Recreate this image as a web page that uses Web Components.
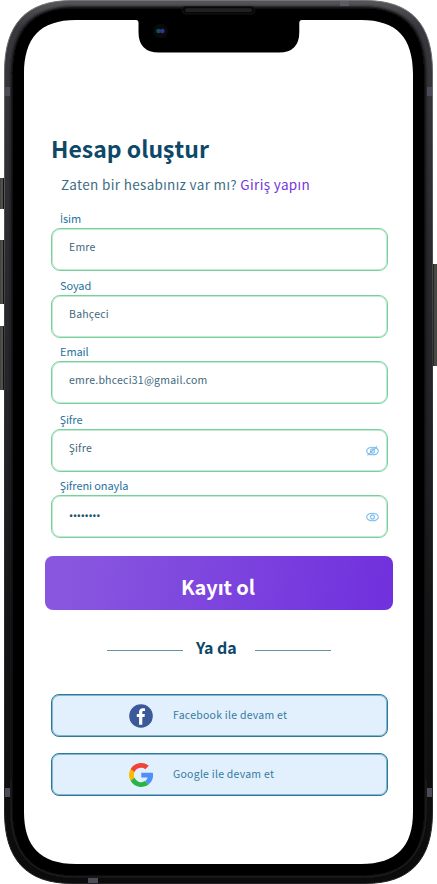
<!DOCTYPE html>
<html lang="tr">
<head>
<meta charset="utf-8">
<title>Hesap oluştur</title>
<style>
body{margin:0;background:#fff;font-family:"Noto Sans CJK SC","Noto Sans",sans-serif;color:#0d4868}
</style>
</head>
<body>
<phone-frame>
  <page-heading>
    <span slot="title">Hesap oluştur</span>
    <span slot="hint">Zaten bir hesabınız var mı?</span>
    <span slot="link">Giriş yapın</span>
  </page-heading>
  <form-stack>
    <text-field label="İsim">Emre</text-field>
    <text-field label="Soyad" style="--gap:6px">Bahçeci</text-field>
    <text-field label="Email" style="--gap:5px">emre.bhceci31@gmail.com</text-field>
    <text-field label="Şifre" icon="off" style="--gap:7px">Şifre</text-field>
    <text-field label="Şifreni onayla" icon="on" style="--gap:5px;--value:#1c536f;--ls:-.25px;--size:11px;--drop:3px;--family:'Noto Sans',sans-serif">••••••••</text-field>
  </form-stack>
  <primary-button>Kayıt ol</primary-button>
  <or-divider>Ya da</or-divider>
  <social-button brand="facebook">Facebook ile devam et</social-button>
  <social-button brand="google">Google ile devam et</social-button>
</phone-frame>
<script>
const define=(name,render)=>customElements.define(name,class extends HTMLElement{
  constructor(){super();this.attachShadow({mode:'open'});}
  connectedCallback(){this.shadowRoot.innerHTML=render(this);}
});

define('phone-frame',()=>`<style>
:host{display:block;position:relative;width:437px;height:884px;overflow:hidden}
svg{position:absolute;inset:0;display:block}
main{position:relative;box-sizing:border-box;padding:131px 49px 0 51px;display:flex;flex-direction:column}
</style>
<svg width="437" height="884" viewBox="0 0 437 884" aria-hidden="true">
<defs>
<linearGradient id="rim" x1="0" y1="0" x2="0" y2="1"><stop offset="0" stop-color="#55555a"/><stop offset=".03" stop-color="#38383e"/><stop offset=".3" stop-color="#29292e"/><stop offset=".5" stop-color="#232327"/><stop offset=".7" stop-color="#141416"/><stop offset="1" stop-color="#0b0b0c"/></linearGradient>
<linearGradient id="edge" x1="0" y1="0" x2="0" y2="1"><stop offset="0" stop-color="#73736f"/><stop offset=".5" stop-color="#2e2e32"/><stop offset="1" stop-color="#242224"/></linearGradient>
<linearGradient id="key" gradientUnits="userSpaceOnUse" x1="0" x2="4" y1="0" y2="0"><stop offset="0" stop-color="#3f3f3c"/><stop offset=".6" stop-color="#5b5b56"/><stop offset=".8" stop-color="#111"/></linearGradient>
<linearGradient id="keyR" gradientUnits="userSpaceOnUse" x1="433" x2="437" y1="0" y2="0"><stop offset="0" stop-color="#111"/><stop offset=".4" stop-color="#4d4d49"/><stop offset="1" stop-color="#44443f"/></linearGradient>
<filter id="soft" x="-5%" y="-5%" width="110%" height="110%"><feGaussianBlur stdDeviation="1.2"/></filter>
</defs>
<g fill="url(#key)"><rect x="-2" y="178" width="6.5" height="31" rx="1"/><rect x="-2" y="240" width="6.5" height="64" rx="1"/><rect x="-2" y="326" width="6.5" height="64" rx="1"/></g><rect x="432.500" y="264" width="6" height="102" rx="1" fill="url(#keyR)"/>
<path d="M72 .5H365C411 .5 432.500 24 432.500 72V812C432.500 859 411 883.500 365 883.500H72C26 883.500 4.500 859 4.500 812V72C4.500 24 26 .5 72 .5Z" fill="url(#rim)" stroke="url(#edge)"/>
<path d="M74 7H363C405 7 425.500 30 425.500 74V810C425.500 853 405 876.500 363 876.500H74C32 876.500 11.500 853 11.500 810V74C11.500 30 32 7 74 7Z" fill="#000" stroke="#18181a" stroke-width="1.500" filter="url(#soft)"/>
<path d="M11 780V810C11 853 32 877 74 877H363C405 877 426 853 426 810V780" fill="none" stroke="#202022"/>
<g fill="#4b4c57"><rect x="5" y="87" width="5" height="9"/><rect x="427" y="87" width="5" height="9"/><rect x="5" y="788" width="5" height="9"/><rect x="427" y="788" width="5" height="9"/><rect x="340" y="1" width="9" height="5" fill="#5c5d68"/><rect x="88" y="878" width="10" height="5"/></g>
<path d="M76 20H136Q138.500 20 138.500 23V32Q138.500 52.500 159 52.500H279Q299.300 52.500 299.300 32V23Q299.300 20 302 20H361C397 20 413 38 413 74V812C413 846 397 864 361 864H76C40 864 24 846 24 812V74C24 38 40 20 76 20Z" fill="#fff"/>
<rect x="182" y="6.500" width="73" height="7.500" rx="3.700" fill="#080808" stroke="#141414"/><rect x="185" y="8.300" width="67" height="3.600" rx="1.800" fill="#202020"/>
<circle cx="160.500" cy="31" r="7.300" fill="#0a0a0c"/><circle cx="158.500" cy="31" r="2.300" fill="#174b5c"/><circle cx="162.300" cy="31" r="2.300" fill="#253b8c"/>
</svg>
<main><slot></slot></main>`);

define('page-heading',()=>`<style>
:host{display:block;white-space:nowrap}
h1{margin:0;font-size:23px;line-height:34px;font-weight:700;letter-spacing:0}
p{margin:9px 0 0 10px;font-size:13.500px;line-height:20px;letter-spacing:.34px;color:#3d6d86}
.link{color:#7435de}
</style><h1><slot name="title"></slot></h1><p><slot name="hint"></slot> <span class="link"><slot name="link"></slot></span></p>`);

define('form-stack',()=>`<style>:host{display:flex;flex-direction:column;margin-top:16px}</style><slot></slot>`);

const eye='<ellipse cx="6.500" cy="5" rx="5.800" ry="3.800"/><ellipse cx="6.500" cy="5" rx="1.900" ry="2.100"/>';
define('text-field',el=>`<style>
:host{display:block;margin-top:var(--gap,0px);white-space:nowrap}
label{display:block;height:19px;padding-left:9px;font-size:11px;line-height:17px;letter-spacing:-.1px;color:#26739a}
.dotted{font-family:"Open Sans",sans-serif}
.box{box-sizing:border-box;width:337px;height:43px;margin-top:-1px;border:1px solid #78d09b;box-shadow:inset 0 0 0 1px #78d09b70;border-radius:9px;display:flex;align-items:center;justify-content:space-between;padding:0 8px 5px 17px;font-family:var(--family,inherit);font-size:var(--size,10.500px);line-height:18px;letter-spacing:var(--ls,.23px);color:var(--value,#41687d)}
.box span{padding-top:var(--drop,0)}
svg{margin-top:5px;fill:none;stroke:#7abdee;stroke-width:1.1}
</style><label>${el.getAttribute('label').replace('İ','<span class="dotted">İ</span>')}</label><div class="box"><span><slot></slot></span>${el.hasAttribute('icon')?`<svg width="13" height="10" viewBox="0 0 13 10">${eye}${el.getAttribute('icon')==='off'?'<path d="M1.500 9.300L11 .5"/>':''}</svg>`:''}</div>`);

define('primary-button',()=>`<style>
:host{display:flex;align-items:center;justify-content:center;box-sizing:border-box;width:348px;height:54px;margin:18px 0 0 -6px;padding:7px 2px 0 0;border-radius:8px;background:linear-gradient(100deg,#8957df 5%,#7131dd 97%);color:#fff;font-weight:700;font-size:20px;line-height:30px;letter-spacing:-.1px}
</style><slot></slot>`);

define('or-divider',()=>`<style>
:host{display:flex;align-items:center;width:224px;height:24px;margin:26px 0 0 56px;font-weight:700;font-size:16px;line-height:24px}
i{width:76px;height:1px;background:#65909f;margin-top:4px}
span{width:72px;box-sizing:border-box;padding:0 0 2px 13px;white-space:nowrap}
</style><i></i><span><slot></slot></span><i></i>`);

const logos={
facebook:'<circle cx="12" cy="12" r="11.800" fill="#3b5998"/><path d="M13.300 20.700V12.900H15.500L15.900 10H13.300V8.300C13.300 7.500 13.600 7.100 14.500 7.100H16V4.400C15.500 4.300 14.700 4.200 13.800 4.200C11.500 4.200 10.100 5.600 10.100 8V10H7.800V12.900H10.100V20.700Z" fill="#fff"/>',
google:'<path d="M1.500 6.300A12 12 0 0 1 19.800 2.800L16.300 6.200A7 7 0 0 0 5.400 9.300Z" fill="#f14336"/><path d="M1.500 6.300A12 12 0 0 0 1.600 17.800L5.500 14.800A7.500 7.500 0 0 1 5.400 9.300Z" fill="#fbbb00"/><path d="M1.600 17.800A12 12 0 0 0 19.800 21.200L16 18.100A7.200 7.200 0 0 1 5.500 14.800Z" fill="#28b446"/><path d="M12.300 9.800H23.800A12 12 0 0 1 19.800 21.200L16 18.100Q18 16.900 18.700 14.500H12.300Z" fill="#518ef8"/>'};
define('social-button',el=>`<style>
:host{display:flex;align-items:center;box-sizing:border-box;width:337px;height:43px;margin-top:34px;padding-left:77px;border:1px solid #287b9e;box-shadow:inset 0 0 0 1px #287b9e80;border-radius:8px;background:#e2f0fe;color:#347b9e;font-size:10.500px;line-height:18px;letter-spacing:.25px;white-space:nowrap}
:host([brand=google]){margin-top:16px}
svg{margin:1px 20px 0 0;flex:none}
span{padding-bottom:2px}
</style><svg width="24" height="24" viewBox="0 0 24 24">${logos[el.getAttribute('brand')]}</svg><span><slot></slot></span>`);
</script>
</body>
</html>
